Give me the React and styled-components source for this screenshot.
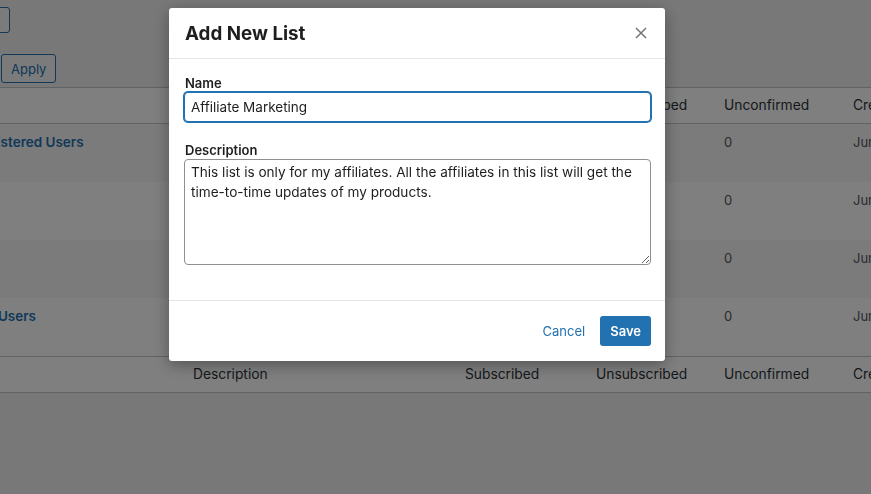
import React from "react";
import styled, { createGlobalStyle } from "styled-components";

const blue = "#2271b1";

const GlobalStyle = createGlobalStyle`
  html, body {
    margin: 0;
    padding: 0;
    background: #f0f0f1;
    font-family: Inter, "Noto Sans", "Liberation Sans", sans-serif;
    color: #3c434a;
    overflow: hidden;
  }
  * { box-sizing: border-box; }
`;

const Page = styled.div`
  width: 1100px;
  height: 494px;
  margin-left: -38px;
  padding-top: 7px;
`;

const TopBar = styled.div`
  display: flex;
  height: 26px;
`;

const OutlineButton = styled.button`
  height: ${(p) => p.h || "29px"};
  width: ${(p) => p.w || "auto"};
  padding: 0 9px;
  border: 1px solid ${blue};
  border-radius: 3px;
  background: #f6f7f7;
  color: ${blue};
  font-family: inherit;
  font-size: 13px;
`;

const ActionBar = styled.div`
  display: flex;
  margin-top: 21px;
  margin-left: 39px;
`;

const Table = styled.div`
  margin-top: 4px;
  background: #fff;
  border-top: 1px solid #c3c4c7;
  border-bottom: 1px solid #c3c4c7;
`;

const Row = styled.div`
  display: grid;
  grid-template-columns: 221px 272px 131px 128px 129px 1fr;
  height: ${(p) => (p.head ? "36px" : "58px")};
  align-items: ${(p) => (p.head ? "center" : "start")};
  background: ${(p) => (p.striped ? "#f6f7f7" : "#fff")};
  border-bottom: ${(p) => (p.divider ? "1px solid #c3c4c7" : "none")};
  border-top: ${(p) => (p.topline ? "1px solid #c3c4c7" : "none")};
`;

const Cell = styled.div`
  padding: ${(p) => (p.head ? "0 10px" : "9px 10px 0")};
  font-size: ${(p) => (p.head ? "13.8px" : "13px")};
  line-height: 19px;
  color: ${(p) => (p.head ? "#2c3338" : "#50575e")};
  white-space: nowrap;
`;

const NameLink = styled.a`
  color: ${blue};
  font-weight: 600;
  font-size: 13.5px;
  text-decoration: none;
`;

const Overlay = styled.div`
  position: fixed;
  inset: 0;
  background: rgba(0, 0, 0, 0.5);
`;

const Modal = styled.div`
  position: fixed;
  left: 169px;
  top: 8px;
  width: 496px;
  background: #fff;
  border-radius: 3px;
  box-shadow: 0 4px 16px rgba(0, 0, 0, 0.35);
`;

const ModalHeader = styled.div`
  display: flex;
  align-items: center;
  justify-content: space-between;
  height: 51px;
  padding: 0 18px 0 16px;
  border-bottom: 1px solid #e5e5e5;
`;

const Title = styled.h2`
  margin: 0;
  font-size: 18.8px;
  font-weight: 700;
  color: #1e1e1e;
`;

const CloseButton = styled.button`
  display: flex;
  padding: 0;
  border: 0;
  background: none;
`;

const ModalBody = styled.div`
  padding: 16px 14px 35px 15px;
`;

const Label = styled.label`
  display: block;
  margin: ${(p) => (p.spaced ? "20px" : "0")} 0 1px 1px;
  font-size: 13px;
  line-height: 16px;
  font-weight: 600;
  color: #1e1e1e;
`;

const TextInput = styled.input`
  display: block;
  width: 100%;
  height: 30px;
  padding: 0 6px;
  border: 1px solid ${blue};
  border-radius: 4px;
  box-shadow: 0 0 0 1px ${blue};
  outline: none;
  font-family: inherit;
  font-size: 13.5px;
  color: #1e1e1e;
  caret-color: #000;
`;

const TextArea = styled.textarea`
  display: block;
  width: 100%;
  height: 106px;
  padding: 2px 6px;
  border: 1px solid #8c8f94;
  border-radius: 4px;
  font-family: inherit;
  font-size: 13.6px;
  line-height: 20px;
  color: #1e1e1e;
  resize: vertical;
`;

const ModalFooter = styled.div`
  display: flex;
  align-items: center;
  justify-content: flex-end;
  gap: 15px;
  height: 61px;
  padding: 0 14px;
  border-top: 1px solid #e5e5e5;
`;

const LinkButton = styled.button`
  padding: 0;
  border: 0;
  background: none;
  color: ${blue};
  font-family: inherit;
  font-size: 13px;
`;

const PrimaryButton = styled.button`
  height: 30px;
  padding: 0 10px;
  border: 0;
  border-radius: 3px;
  background: ${blue};
  color: #fff;
  font-family: inherit;
  font-size: 13px;
  font-weight: 600;
`;

const columns = ["", "Description", "Subscribed", "Unsubscribed", "Unconfirmed", "Created"];

const lists = [
  { name: "Registered Users" },
  { name: "" },
  { name: "" },
  { name: "WP Users" },
];

const HeadRow = ({ footer }) => (
  <Row head topline={footer} divider={!footer}>
    {columns.map((c, i) => (
      <Cell head key={i}>
        {c}
      </Cell>
    ))}
  </Row>
);

export default function App() {
  return (
    <>
      <GlobalStyle />
      <Page>
        <TopBar>
          <OutlineButton h="26px" w="48px">›</OutlineButton>
        </TopBar>
        <ActionBar>
          <OutlineButton>Apply</OutlineButton>
        </ActionBar>
        <Table>
          <HeadRow />
          {lists.map((l, i) => (
            <Row key={i} striped={i % 2 === 0}>
              <Cell>{l.name && <NameLink href="#">{l.name}</NameLink>}</Cell>
              <Cell />
              <Cell>0</Cell>
              <Cell>0</Cell>
              <Cell>0</Cell>
              <Cell>June 12, 2020</Cell>
            </Row>
          ))}
          <HeadRow footer />
        </Table>
      </Page>
      <Overlay />
      <Modal>
        <ModalHeader>
          <Title>Add New List</Title>
          <CloseButton aria-label="Close">
            <svg width="12" height="12" viewBox="0 0 12 12">
              <path d="M1 1L11 11M11 1L1 11" stroke="#757575" strokeWidth="1.5" />
            </svg>
          </CloseButton>
        </ModalHeader>
        <ModalBody>
          <Label>Name</Label>
          <TextInput defaultValue="Affiliate Marketing" autoFocus />
          <Label spaced>Description</Label>
          <TextArea defaultValue="This list is only for my affiliates. All the affiliates in this list will get the time-to-time updates of my products." />
        </ModalBody>
        <ModalFooter>
          <LinkButton>Cancel</LinkButton>
          <PrimaryButton>Save</PrimaryButton>
        </ModalFooter>
      </Modal>
    </>
  );
}
